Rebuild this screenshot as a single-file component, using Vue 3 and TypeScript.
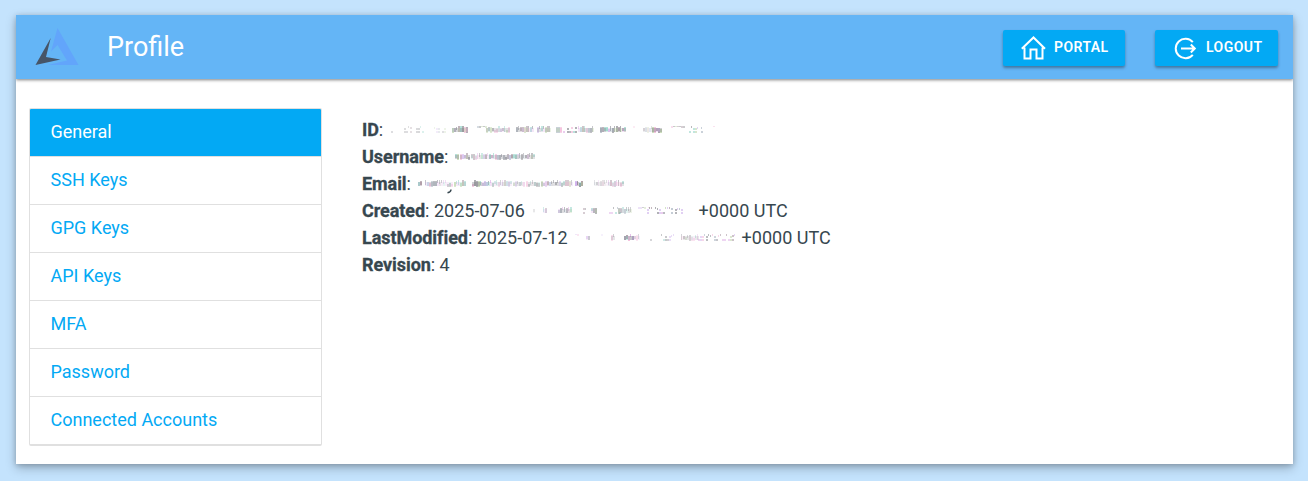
<script setup lang="ts">
type Segment = [start: number, end: number, opacity: number, mode?: 'top' | 'ends']
interface Mark { x: number; y: number; w: number; h: number; color: string; opacity: number }
interface Detail {
  label: string
  value?: string
  suffix?: string
  offset?: number
  width?: number
  segments?: Segment[]
  tail?: boolean
}

const tabs = ['General', 'SSH Keys', 'GPG Keys', 'API Keys', 'MFA', 'Password', 'Connected Accounts']

const details: Detail[] = [
  {
    label: 'ID', offset: 390, width: 328,
    segments: [[391, 397, 0.25, 'ends'], [404, 411, 0.22, 'ends'], [414, 424, 0.25, 'ends'], [432, 446, 0.2, 'ends'], [452, 468, 0.75], [477, 486, 0.35, 'top'], [486, 509, 0.5], [516, 534, 0.6], [537, 550, 0.6], [556, 562, 0.65], [563, 576, 0.5, 'ends'], [578, 594, 0.6], [600, 626, 0.75], [633, 637, 0.2, 'top'], [643, 652, 0.3], [652, 662, 0.85], [669, 684, 0.35, 'top'], [689, 704, 0.45, 'ends'], [711, 715, 0.3, 'top']],
  },
  { label: 'Username', offset: 455, width: 82, segments: [[455, 459, 0.75], [460, 470, 0.65], [471, 489, 0.5], [489, 520, 0.65], [521, 535, 0.55]] },
  { label: 'Email', offset: 418, width: 208, tail: true, segments: [[418, 422, 0.75], [425, 438, 0.6], [439, 452, 0.45], [454, 465, 0.6], [472, 492, 0.75], [492, 512, 0.45], [513, 524, 0.4], [526, 539, 0.45], [541, 558, 0.55], [559, 572, 0.5], [575, 583, 0.95], [594, 608, 0.3], [608, 624, 0.55]] },
  { label: 'Created', value: '2025-07-06', suffix: '+0000 UTC', offset: 532, width: 154, segments: [[533, 535, 0.15], [543, 547, 0.45], [558, 571, 0.6], [583, 586, 0.35, 'ends'], [591, 597, 0.65], [607, 620, 0.4, 'ends'], [618, 632, 0.5], [638, 650, 0.3, 'top'], [647, 683, 0.5, 'ends']] },
  { label: 'LastModified', value: '2025-07-12', suffix: '+0000 UTC', offset: 574, width: 162, segments: [[575, 578, 0.25, 'top'], [586, 589, 0.45], [601, 603, 0.15, 'top'], [611, 614, 0.45], [624, 633, 0.9], [634, 640, 0.35], [650, 654, 0.3, 'ends'], [661, 674, 0.35, 'ends'], [681, 698, 0.4], [698, 735, 0.42, 'ends']] },
  { label: 'Revision', value: '4' },
]

const inks = ['#656672', '#d79be0', '#777782', '#75c7b9', '#8b7180', '#62636b', '#c4a1e8', '#8a9aab', '#a9c890', '#6c6c74', '#ee9fca']

const noise = (n: number) => {
  const s = Math.sin(n * 12.9898) * 43758.5453
  return s - Math.floor(s)
}

function marksFor(row: Detail, index: number): Mark[] {
  const marks: Mark[] = []
  for (const [start, end, opacity, mode] of row.segments ?? []) {
    for (let x = start; x < end; x += 2) {
      const n = noise(x + index * 91)
      const m = noise(x * 2.3 + index * 37)
      const left = x - (row.offset ?? 0)
      const color = inks[Math.floor(n * inks.length)]
      if (mode === 'top') {
        if (n > 0.3) marks.push({ x: left, y: 2, w: 2, h: 1 + (m > 0.6 ? 1 : 0), color, opacity })
      } else if (mode === 'ends') {
        if (n > 0.35) marks.push({ x: left, y: 2 + Math.floor(m * 3), w: 1 + (m > 0.5 ? 1 : 0), h: 2, color, opacity })
        if (m > 0.45) marks.push({ x: left, y: 7, w: 2, h: 2, color, opacity })
      } else {
        const h = 3 + Math.floor(m * 4)
        marks.push({ x: left, y: 2 + Math.floor(n * (8 - h)), w: 1 + (n > 0.3 ? 1 : 0), h, color, opacity: opacity * 0.7 })
        marks.push({ x: left, y: 4, w: 2, h: 4, color: inks[Math.floor(m * inks.length)], opacity: opacity * 0.4 })
      }
    }
  }
  return marks
}

const rows = details.map((d, i) => ({
  ...d,
  marks: marksFor(d, i),
  box: { marginLeft: `${(d.offset ?? 0) - 362}px`, width: `${d.width ?? 0}px` },
}))
</script>

<template>
  <div class="page">
    <main class="card">
      <header class="bar">
        <svg class="logo" viewBox="0 0 44 40" aria-hidden="true">
          <path d="M22.5 1 43.5 38H13L32 33.5 22.5 18 16 24.5Z" fill="#62a5fb" />
          <path d="M15.7 11 11 30 25.5 32.5.5 38Z" fill="#465568" />
        </svg>
        <h1>Profile</h1>
        <nav class="actions">
          <button type="button" class="portal">
            <svg viewBox="0 0 26 26" aria-hidden="true">
              <path d="M1.8 13.7 13.5 2.5 25 13.7M4.5 12.5V23.5H10.5V14.5H16.5V23.5H22.5V12.5" />
            </svg>
            <span>PORTAL</span>
          </button>
          <button type="button" class="logout">
            <svg viewBox="0 0 26 26" aria-hidden="true">
              <path d="M20.8 7.2A9.7 9.7 0 1 0 20.8 19.8M9 13.5H23M18.8 9.5 22.8 13.5 18.8 17.5" />
            </svg>
            <span>LOGOUT</span>
          </button>
        </nav>
      </header>
      <div class="content">
        <ul class="tabs">
          <li v-for="(tab, i) in tabs" :key="tab" :class="{ active: i === 0 }">{{ tab }}</li>
        </ul>
        <section class="details">
          <div v-for="row in rows" :key="row.label" class="row">
            <span class="text"><b>{{ row.label }}</b>: {{ row.value }}</span>
            <svg v-if="row.segments" class="redacted" :style="row.box" aria-hidden="true">
              <rect v-for="(m, i) in row.marks" :key="i" :x="m.x" :y="m.y" :width="m.w" :height="m.h" :fill="m.color" :opacity="m.opacity" />
              <path v-if="row.tail" d="M33 11.5Q33 14 29.5 14.8" fill="none" stroke="#37474f" stroke-width="1.4" />
            </svg>
            <span v-if="row.suffix" class="suffix" :class="row.label.toLowerCase()">{{ row.suffix }}</span>
          </div>
        </section>
      </div>
    </main>
  </div>
</template>

<style>
body { margin: 0; background: #c4e3fd; }
</style>

<style scoped>
.page {
  box-sizing: border-box;
  min-height: 100vh;
  padding: 15px 15px 17px 16px;
  overflow: hidden;
}
.card {
  box-sizing: border-box;
  height: 449px;
  background: #fff;
  box-shadow: 0 4px 10px rgba(0, 0, 0, .25), 0 1px 5px rgba(0, 0, 0, .18);
  color: #37474f;
  font: 18px/27px Roboto, sans-serif;
}
.bar {
  height: 64px;
  display: flex;
  align-items: center;
  background: #64b5f6;
  box-shadow: 0 1px 3px rgba(0, 0, 0, .5);
  clip-path: inset(0 0 -5px);
}
.logo { width: 44px; height: 40px; margin: 0 0 0 19px; }
h1 { margin: 0 0 0 28px; color: #fff; font-size: 27px; line-height: 36px; font-weight: 400; }
.actions { margin: 2px 15px 0 auto; display: flex; gap: 30px; }
button {
  box-sizing: border-box;
  height: 36px;
  border: 0;
  border-radius: 2px;
  padding: 0 0 0 17px;
  display: flex;
  align-items: center;
  gap: 8px;
  color: #fff;
  background: #03a9f4;
  box-shadow: 0 2px 3px rgba(0, 0, 0, .35);
  font: 600 14px/20px Roboto, sans-serif;
  letter-spacing: .45px;
}
button span { margin-top: -2px; }
.portal { width: 122px; }
.logout { width: 123px; }
button svg { width: 26px; height: 26px; fill: none; stroke: #fff; stroke-width: 2; }
.content { display: flex; padding: 29px 0 0 13px; }
.tabs {
  box-sizing: border-box;
  width: 293px;
  height: 338px;
  margin: 0;
  padding: 0;
  border: 1px solid #e0e0e0;
  border-bottom-width: 2px;
  border-radius: 2px;
  list-style: none;
  overflow: hidden;
  color: #03a9f4;
}
.tabs li {
  box-sizing: border-box;
  height: 48px;
  padding: 9px 20.5px;
  border-bottom: 1px solid #e0e0e0;
}
.tabs li:last-child { border: 0; }
.tabs .active { background: #03a9f4; color: #fff; }
.details { margin: 8px 0 0 40px; }
.row { display: grid; height: 27px; white-space: nowrap; align-items: center; }
.row > * { grid-area: 1 / 1; }
b { letter-spacing: -.06px; -webkit-text-stroke: .3px currentColor; font-variant-ligatures: common-ligatures; }
.redacted { height: 17px; align-self: start; margin-top: 8px; overflow: visible; }
.created { margin-left: 336.6px; }
.lastmodified { margin-left: 379.6px; }
</style>
